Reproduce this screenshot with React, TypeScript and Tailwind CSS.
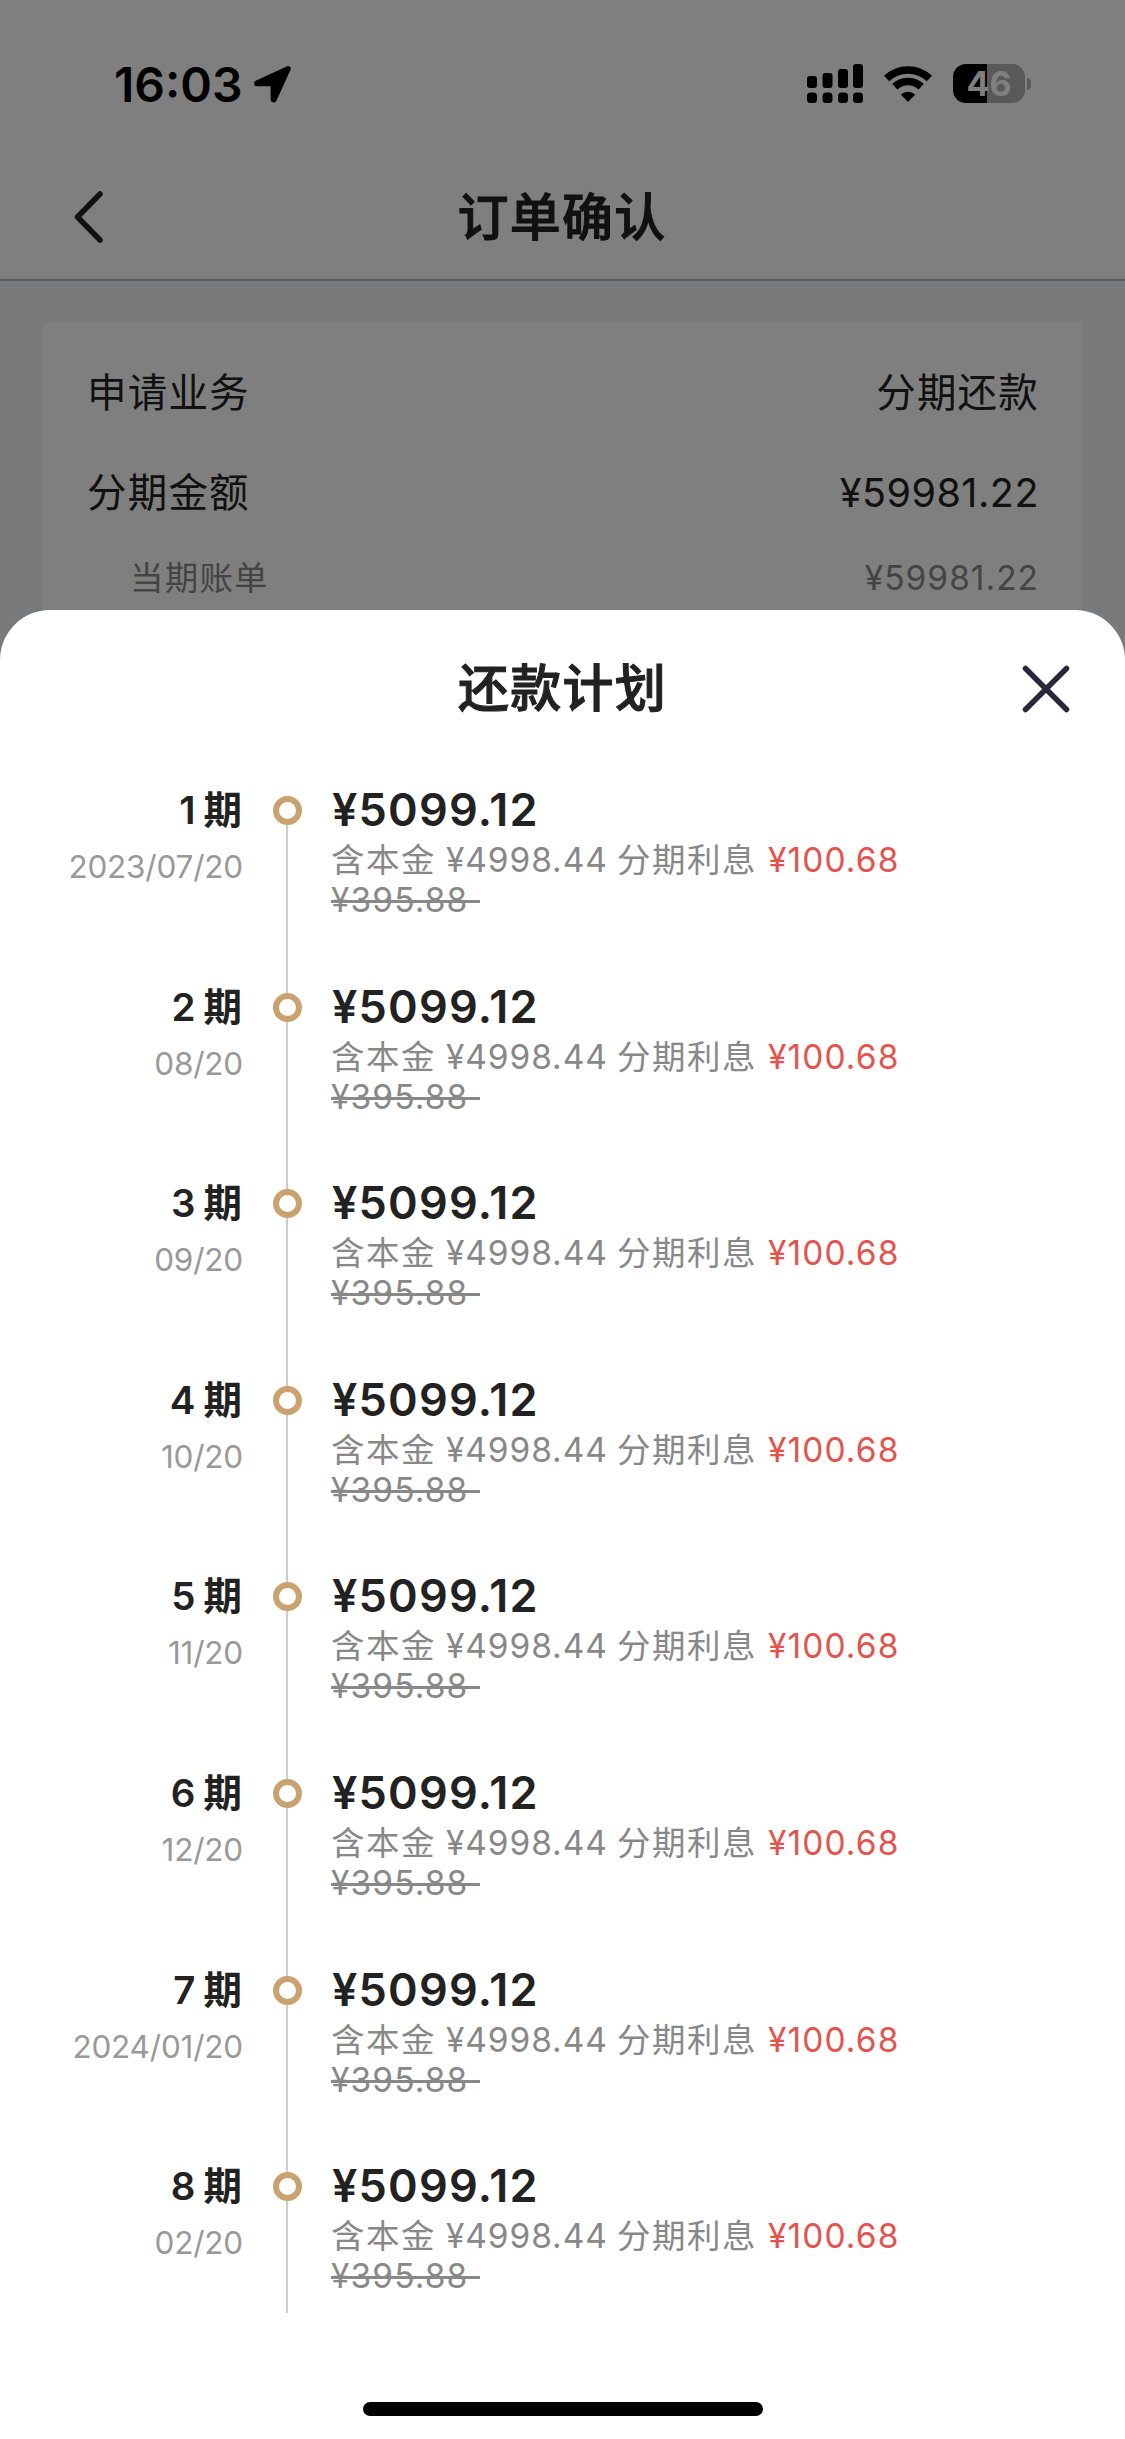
type Period = { no: number; date: string };

const periods: Period[] = [
  { no: 1, date: "2023/07/20" },
  { no: 2, date: "08/20" },
  { no: 3, date: "09/20" },
  { no: 4, date: "10/20" },
  { no: 5, date: "11/20" },
  { no: 6, date: "12/20" },
  { no: 7, date: "2024/01/20" },
  { no: 8, date: "02/20" },
];

function StatusBar() {
  return (
    <div className="flex h-[168px] items-start justify-between pl-[114px] pr-[94px] pt-[64px]">
      <div className="flex items-start">
        <span className="w-[138px] text-[48px] font-semibold leading-[41px] text-black">16:03</span>
        <svg className="mt-[1px] h-[40px] w-[40px]" viewBox="0 0 40 40" fill="#000">
          <path
            d="M4.7 18 L36.3 3.6 L22 35 L21.2 35 L21 18.7 L4.7 18.7 Z"
            stroke="#000"
            strokeWidth="5"
            strokeLinejoin="round"
          />
        </svg>
      </div>

      <div className="flex items-start">
        {/* dual sim signal */}
        <svg className="h-[40px] w-[56px]" viewBox="0 0 56 40" fill="#000">
          <rect x="0" y="12" width="10" height="12" rx="3" />
          <rect x="15.5" y="9" width="10" height="15" rx="3" />
          <rect x="31" y="5" width="10" height="19" rx="3" />
          <rect x="46" y="0" width="10" height="24" rx="3" />
          <rect x="0" y="28.5" width="10" height="10.5" rx="3.5" />
          <rect x="15.5" y="28.5" width="10" height="10.5" rx="3.5" />
          <rect x="31" y="28.5" width="10" height="10.5" rx="3.5" />
          <rect x="46" y="28.5" width="10" height="10.5" rx="3.5" />
        </svg>
        {/* wifi */}
        <svg className="ml-[21px] h-[40px] w-[48px]" viewBox="0 0 48 40">
          <g fill="none" stroke="#000" strokeWidth="7.5">
            <path d="M2.6 14.5 A31 31 0 0 1 45.4 14.5" />
            <path d="M10.8 22.8 A19 19 0 0 1 37.2 22.8" />
          </g>
          <path d="M24 38 L16.8 30.6 A10.5 10.5 0 0 1 31.2 30.6 Z" fill="#000" />
        </svg>
        {/* battery */}
        <div className="ml-[21px] flex items-center">
          <div className="flex h-[39px] w-[72px] items-center justify-center overflow-hidden rounded-[13px] bg-[linear-gradient(to_right,#000_34px,#b2b2b2_34px)]">
            <span className="text-[34px] font-bold leading-[39px] text-white">46</span>
          </div>
          <div className="ml-[2px] h-[12px] w-[4px] rounded-r-[4px] bg-[#b2b2b2]" />
        </div>
      </div>
    </div>
  );
}

function OrderPage() {
  return (
    <div className="h-[660px] bg-[#f2f4f8]">
      <div className="h-[281px] border-b-2 border-[#b8b8b8] bg-white">
        <StatusBar />
        <div className="grid h-[99px] grid-cols-[1fr_auto_1fr] items-center pl-[73px]">
          <svg className="-mt-[2px] h-[56px] w-[32px]" viewBox="0 0 32 56" fill="none">
            <path
              d="M27 5 L4.5 28 L27 51"
              stroke="#222"
              strokeWidth="5.5"
              strokeLinecap="round"
              strokeLinejoin="round"
            />
          </svg>
          <h1 className="-ml-[74px] text-[51px] font-medium leading-[60px] tracking-[1.3px] text-[#222] [-webkit-text-stroke:1px_#222]">
            订单确认
          </h1>
        </div>
      </div>

      <div className="mx-[43px] mt-[42px] h-[337px] bg-white pl-[44px] pr-[43px] pt-[40px] text-[#222]">
        <div className="flex justify-between text-[39.5px] leading-[61px]">
          <span className="tracking-[1.2px]">申请业务</span>
          <span className="tracking-[1.2px]">分期还款</span>
        </div>
        <div className="mt-[39px] flex justify-between text-[39.5px] leading-[61px]">
          <span className="tracking-[1.2px]">分期金额</span>
          <span className="tracking-[0.5px]">¥59981.22</span>
        </div>
        <div className="mt-[28px] flex justify-between pl-[43px] text-[33.5px] leading-[53px] text-[#888]">
          <span className="tracking-[1.2px]">当期账单</span>
          <span className="tracking-[1px]">¥59981.22</span>
        </div>
      </div>
    </div>
  );
}

function PlanRow({ no, date }: Period) {
  return (
    <li className="flex h-[196.6px] last:h-[141px]">
      <div className="w-[243px] text-right">
        <p className="text-[38.5px] font-semibold leading-[28px] tracking-[1px] text-[#222]">
          {no}
          <span className="ml-[7px]">期</span>
        </p>
        <p className="mt-[23px] text-[31.5px] leading-[40px] tracking-[-0.2px] text-[#999]">{date}</p>
      </div>

      <div className="ml-[30px] flex w-[29px] flex-col items-center">
        <div className="h-[29px] w-[29px] shrink-0 rounded-full border-[6px] border-[#c9a26f] bg-white" />
        <div className="mr-[1px] w-[2px] flex-1 bg-[#ccc]" />
      </div>

      <div className="ml-[29px] text-[33.5px] leading-[40px] tracking-[1.1px] text-[#888]">
        <p className="pl-[1px] text-[45px] font-semibold leading-[28px] tracking-[1.2px] text-[#222]">¥5099.12</p>
        <p className="mt-[16px] flex whitespace-nowrap">
          <span className="w-[115px] tracking-[1.5px]">含本金</span>
          <span className="w-[171px] tracking-[0.9px]">¥4998.44</span>
          <span className="w-[151px] tracking-[1.5px]">分期利息</span>
          <span className="text-[#e2544e]">¥100.68</span>
        </p>
        <p className="relative w-[149px]">
          ¥395.88
          <span className="absolute left-0 top-[20px] h-[3px] w-full bg-[#888]" />
        </p>
      </div>
    </li>
  );
}

export default function App() {
  return (
    <div className="relative h-[2439px] w-[1125px] overflow-hidden bg-[#808080] font-['Inter','Noto_Sans_CJK_SC',sans-serif]">
      <OrderPage />
      <div className="absolute inset-0 bg-black/50" />

      {/* repayment plan sheet */}
      <section className="absolute inset-x-0 bottom-0 top-[610px] rounded-t-[50px] bg-white">
        <header className="grid h-[158px] grid-cols-[1fr_auto_1fr] items-center">
          <h2 className="col-start-2 text-[51px] font-medium leading-[60px] tracking-[1.3px] text-[#222] [-webkit-text-stroke:1px_#222]">
            还款计划
          </h2>
          <svg className="mr-[54px] h-[50px] w-[50px] justify-self-end" viewBox="0 0 50 50">
            <path d="M4.5 4.5 L45.5 45.5 M45.5 4.5 L4.5 45.5" stroke="#2b283d" strokeWidth="5.5" strokeLinecap="round" />
          </svg>
        </header>

        <ul className="pt-[28px]">
          {periods.map((p) => (
            <PlanRow key={p.no} no={p.no} date={p.date} />
          ))}
        </ul>

        <div className="absolute bottom-[23px] left-[363px] h-[14px] w-[400px] rounded-full bg-black" />
      </section>
    </div>
  );
}
